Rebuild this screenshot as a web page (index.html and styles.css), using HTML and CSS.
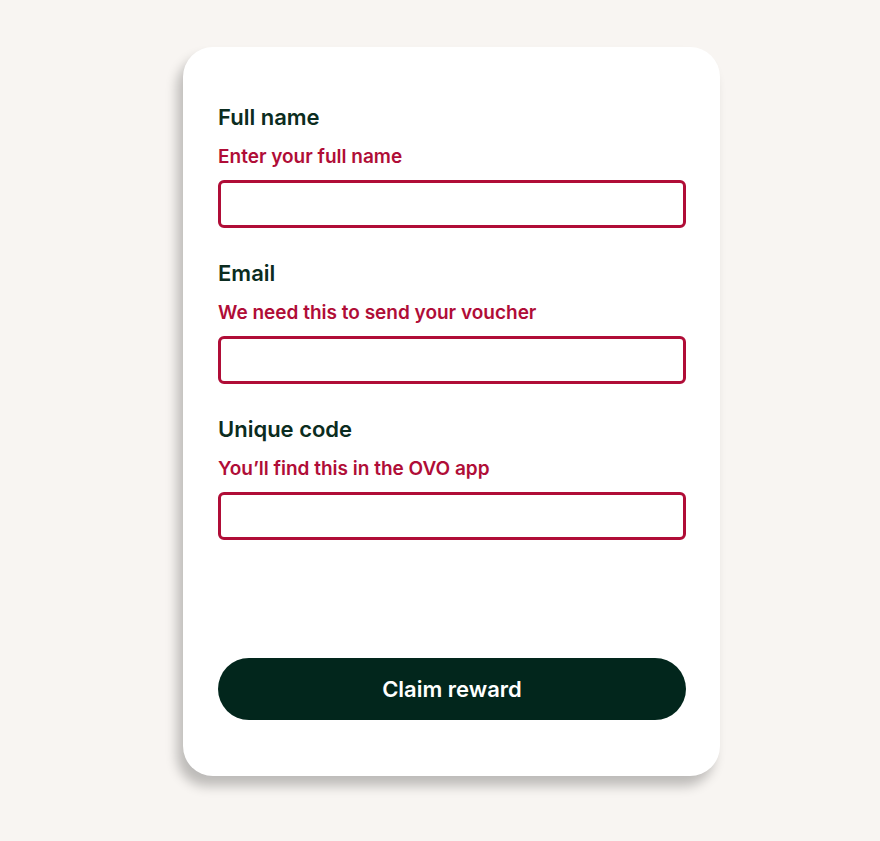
FILE: index.html
```html
<!DOCTYPE html>
<html lang="en">
<head>
  <meta charset="UTF-8" />
  <title>Claim your reward</title>
  <link rel="stylesheet" href="styles.css">
</head>
<body>

  <form class="claim-card">

    <!-- Full name -->
    <div class="field">
      <label for="full-name">Full name</label>
      <p class="hint">Enter your full name</p>
      <input type="text" id="full-name" class="text-input">
    </div>

    <!-- Email -->
    <div class="field">
      <label for="email">Email</label>
      <p class="hint">We need this to send your voucher</p>
      <input type="email" id="email" class="text-input">
    </div>

    <!-- Unique code -->
    <div class="field">
      <label for="code">Unique code</label>
      <p class="hint">You’ll find this in the OVO app</p>
      <input type="text" id="code" class="text-input">
    </div>

    <button type="button" class="btn-claim">Claim reward</button>
  </form>

</body>
</html>
```

FILE: styles.css
```css
body {
  margin: 0;
  padding: 47px 0 0 183px;
  min-height: 841px;
  box-sizing: border-box;
  background-color: #f8f5f2;
  font-family: Inter, "Noto Sans", sans-serif;
}

.claim-card {
  width: 537px;
  box-sizing: border-box;
  padding: 56px 34px 56px 35px;
  background: #fff;
  border-radius: 30px;
  box-shadow: -6px 10px 12px rgba(0, 0, 0, 0.24);
  display: flex;
  flex-direction: column;
}

.field {
  display: flex;
  flex-direction: column;
  margin-bottom: 31px;
}

.field label {
  font-size: 22px;
  line-height: 28px;
  font-weight: 600;
  color: #0b2c20;
}

.hint {
  margin: 14px 0 11px;
  font-size: 19px;
  line-height: 24px;
  font-weight: 600;
  color: #b00d37;
}

.text-input {
  height: 48px;
  box-sizing: border-box;
  border: 3px solid #b00d37;
  border-radius: 6px;
  font-family: inherit;
  font-size: 18px;
  padding: 0 12px;
  outline: none;
}

.btn-claim {
  margin-top: 87px;
  height: 62px;
  border: none;
  border-radius: 31px;
  background-color: #02261c;
  color: #fff;
  font-family: inherit;
  font-size: 22px;
  font-weight: 600;
  cursor: pointer;
}
```
